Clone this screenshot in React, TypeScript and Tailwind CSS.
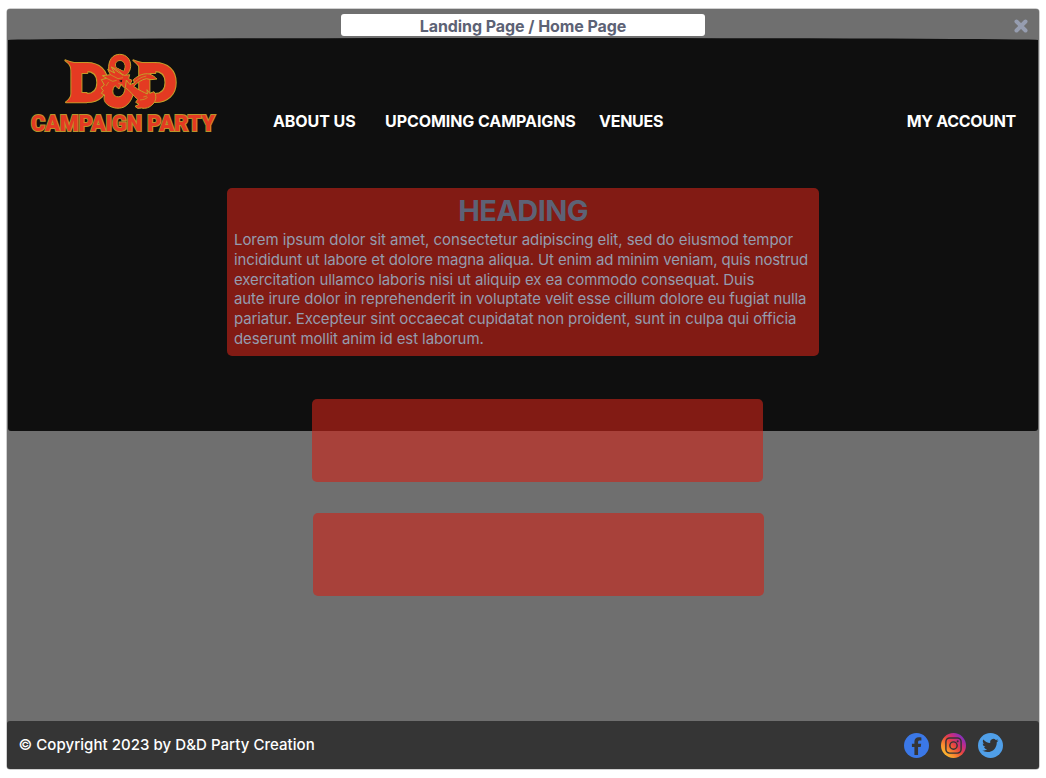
function Initials({ stroke, width }: { stroke: string; width: number }) {
  return (
    <g fill="#e43a22" stroke={stroke} strokeWidth={width} strokeLinejoin="round">
      <path d="M46 46 Q60 52 72 54 H112 V84 H66 Q67 60 46 46Z" />
      <path d="M48 172 Q62 162 67 144 H110 V172Z" />
      <path d="M250 46 Q264 52 276 54 H316 V84 H280 Q270 62 250 46Z" />
      <g fontFamily="Inter, sans-serif" fontWeight="800" fontSize="162">
        <text x="55" y="172" textLength="124" lengthAdjust="spacingAndGlyphs">D</text>
        <text x="258" y="172" textLength="126" lengthAdjust="spacingAndGlyphs">D</text>
      </g>
    </g>
  );
}

function Logo() {
  return (
    <svg
      viewBox="-60 24 558 243"
      className="h-[81px] w-[186px] shrink-0 overflow-visible"
      role="img"
      aria-label="D&D Campaign Party"
    >
      <Initials stroke="#c4a02a" width={6} />
      <Initials stroke="#e43a22" width={0.5} />
      <g fill="#e43a22" stroke="#c4a02a" strokeWidth="3" strokeLinejoin="round">
        {/* head loop */}
        <path
          fillRule="evenodd"
          d="M176 74 C174 45 188 28 209 28 C230 28 243 44 242 64 C241 80 231 91 219 98 L192 91 C183 87 177 82 176 74Z M199 68 L221 78 C230 62 222 47 210 47 C199 47 193 57 199 68Z"
        />
        <path d="M201 67 L220 77 C228 62 221 49 210 49 C200 49 195 58 201 67Z" fill="#0f0f0f" stroke="none" />
        {/* body coil */}
        <path d="M154 104 L170 100 L157 92 L181 89 L173 73 L194 84 L184 66 L207 83 L223 91 L239 89 L236 101 L246 106 L239 121 L252 137 C249 157 240 176 222 186 C204 194 181 188 169 176 C161 168 161 158 164 150 L154 145 L160 137 L153 128 L163 120Z" />
        <path
          d="M195 122 C186 132 185 150 200 155 C214 158 224 146 225 130 L213 119 L207 132Z"
          fill="#0f0f0f"
        />
        {/* wing and tail */}
        <path d="M229 105 L240 119 L253 113 L250 104 C265 91 281 84 298 87 C308 90 316 97 321 102 L303 104 L289 101 C274 104 262 113 251 124 C268 137 281 141 292 147 L291 134 L299 145 L312 140 C321 151 318 169 309 177 C300 188 285 192 275 189 L263 190 L255 184 L267 178 L257 172 L263 163 C249 153 241 137 226 128Z" />
        <path
          fill="none"
          strokeWidth="2.2"
          d="M184 66 Q210 74 218 92 M181 89 L204 101 L219 98 M170 100 L188 109 L200 106 M205 115 L218 120 M249 118 Q264 98 289 93 M280 156 L291 153 M270 165 L283 163 L293 157 M176 111 L168 123"
        />
        <path d="M207 107 L217 104 L215 112Z" fill="#111" stroke="none" />
      </g>
      <g fontFamily="Roboto, sans-serif" fontWeight="900" fontSize="67" fill="#e43a22">
        <text x="-57" y="257" textLength="552" lengthAdjust="spacingAndGlyphs" stroke="#b8932a" strokeWidth="6">
          CAMPAIGN PARTY
        </text>
        <text x="-57" y="257" textLength="552" lengthAdjust="spacingAndGlyphs">
          CAMPAIGN PARTY
        </text>
      </g>
    </svg>
  );
}

function Facebook() {
  return (
    <svg viewBox="0 0 24 24" className="size-[25px]" aria-label="Facebook">
      <circle cx="12" cy="12" r="12" fill="#3b78e7" />
      <path
        fill="#353535"
        d="M10 21.2v-7.7H7.6v-3.3H10V8.3c0-2.8 1.6-4.3 4.2-4.3.9 0 1.9.1 2.5.2v3h-1.6c-1.2 0-1.6.6-1.6 1.5v1.5h3l-.5 3.3h-2.5v7.7Z"
      />
    </svg>
  );
}

function Instagram() {
  return (
    <svg viewBox="0 0 24 24" className="size-[25px]" aria-label="Instagram">
      <defs>
        <linearGradient id="sunset" x1="0.1" y1="0.9" x2="0.85" y2="0.15">
          <stop offset="0" stopColor="#fdc52f" />
          <stop offset="0.3" stopColor="#f8862f" />
          <stop offset="0.55" stopColor="#e8463f" />
          <stop offset="0.78" stopColor="#c52c84" />
          <stop offset="1" stopColor="#8530bd" />
        </linearGradient>
      </defs>
      <circle cx="12" cy="12" r="12" fill="url(#sunset)" />
      <g fill="none" stroke="#353535" strokeWidth="1.4">
        <rect x="4.7" y="4.7" width="14.6" height="14.6" rx="3.6" />
        <circle cx="12" cy="12" r="3.5" />
      </g>
      <circle cx="16" cy="8" r="1" fill="#353535" />
    </svg>
  );
}

function Twitter() {
  return (
    <svg viewBox="0 0 24 24" className="size-[25px]" aria-label="Twitter">
      <circle cx="12" cy="12" r="12" fill="#509fe8" />
      <path
        transform="translate(4 4.2) scale(.65)"
        fill="#353535"
        d="M23.953 4.57a10 10 0 01-2.825.775 4.958 4.958 0 002.163-2.723c-.951.555-2.005.959-3.127 1.184a4.92 4.92 0 00-8.384 4.482C7.69 8.095 4.067 6.13 1.64 3.162a4.822 4.822 0 00-.666 2.475c0 1.71.87 3.213 2.188 4.096a4.904 4.904 0 01-2.228-.616v.06a4.923 4.923 0 003.946 4.827 4.996 4.996 0 01-2.212.085 4.936 4.936 0 004.604 3.417 9.867 9.867 0 01-6.102 2.105c-.39 0-.779-.023-1.17-.067a13.995 13.995 0 007.557 2.209c9.053 0 13.998-7.496 13.998-13.985 0-.21 0-.42-.015-.63A9.935 9.935 0 0024 4.59z"
      />
    </svg>
  );
}

const lines = [
  { text: "Lorem ipsum dolor sit amet, consectetur adipiscing elit, sed do eiusmod tempor", track: "tracking-[-0.055px]" },
  { text: "incididunt ut labore et dolore magna aliqua. Ut enim ad minim veniam, quis nostrud", track: "tracking-[-0.135px]" },
  { text: "exercitation ullamco laboris nisi ut aliquip ex ea commodo consequat. Duis", track: "tracking-[-0.09px]" },
  { text: "aute irure dolor in reprehenderit in voluptate velit esse cillum dolore eu fugiat nulla", track: "tracking-[-0.11px]" },
  { text: "pariatur. Excepteur sint occaecat cupidatat non proident, sunt in culpa qui officia", track: "tracking-[-0.1px]" },
  { text: "deserunt mollit anim id est laborum.", track: "tracking-[-0.08px]" },
];

export default function App() {
  return (
    <div className="h-[778px] overflow-hidden bg-white pl-[7px] pt-[9px] font-['Inter',sans-serif]">
      <div className="flex h-[760px] w-[1032px] flex-col overflow-hidden rounded-[3px] bg-[#6f6f6f] shadow-[0_0_0_0.5px_#a0a0a0]">
        <div className="grid h-[29px] shrink-0 grid-cols-[1fr_364px_1fr] items-start">
          <h1 className="col-start-2 mt-[5px] h-[22px] rounded-[3px] bg-white text-center text-base leading-[24px] font-bold tracking-[-0.07px] text-[#5d6275]">
            Landing Page / Home Page
          </h1>
          <button className="mt-[10px] mr-[11px] justify-self-end" aria-label="Close">
            <svg viewBox="0 0 14 14" className="size-[14px]">
              <path d="M2.5 2.5 11.5 11.5M11.5 2.5 2.5 11.5" stroke="#969db0" strokeWidth="4" strokeLinecap="round" />
            </svg>
          </button>
        </div>

        <section className="mx-px h-[393px] shrink-0 rounded-[50%_50%_3px_3px/2px_2px_3px_3px] bg-[#0f0f0f]">
          <header className="flex pt-[15px] pl-[22px] pr-[22px] text-base font-bold text-white">
            <Logo />
            <nav className="flex flex-1 items-start pt-[56px] leading-6 whitespace-nowrap">
              <a className="ml-[57px] w-[112px] tracking-[-0.08px]">ABOUT US</a>
              <a className="w-[214px] tracking-[-0.07px]">UPCOMING CAMPAIGNS</a>
              <a className="tracking-[-0.25px]">VENUES</a>
              <a className="ml-auto tracking-[-0.3px]">MY ACCOUNT</a>
            </nav>
          </header>
          <article className="mt-[54px] ml-[219px] h-[168px] w-[592px] rounded-[5px] bg-[#cf2317]/60 px-[7px] pt-[5px]">
            <h2 className="text-center text-[29px] leading-[36px] font-bold tracking-[-0.6px] text-[#5d6275]">HEADING</h2>
            <div className="mt-px text-[15px] leading-[19.8px] whitespace-nowrap text-[#959cae]">
              {lines.map((line) => (
                <p key={line.text} className={line.track}>{line.text}</p>
              ))}
            </div>
          </article>
        </section>

        <main className="-mt-[32px] flex flex-1 flex-col gap-[31.5px] pl-[304.5px]">
          <div className="relative h-[82.5px] w-[451.5px] rounded-[5px] bg-[#cf2317]/60" />
          <div className="ml-[1px] h-[82.5px] w-[451.5px] rounded-[5px] bg-[#cf2317]/60" />
        </main>

        <footer className="flex h-[48px] shrink-0 items-center justify-between rounded-[3px] bg-[#353535] pr-[36.5px] pl-[11.5px]">
          <p className="text-[15px] font-medium tracking-[0.05px] text-white">© Copyright 2023 by D&amp;D Party Creation</p>
          <div className="flex gap-[12px]">
            <Facebook />
            <Instagram />
            <Twitter />
          </div>
        </footer>
      </div>
    </div>
  );
}
